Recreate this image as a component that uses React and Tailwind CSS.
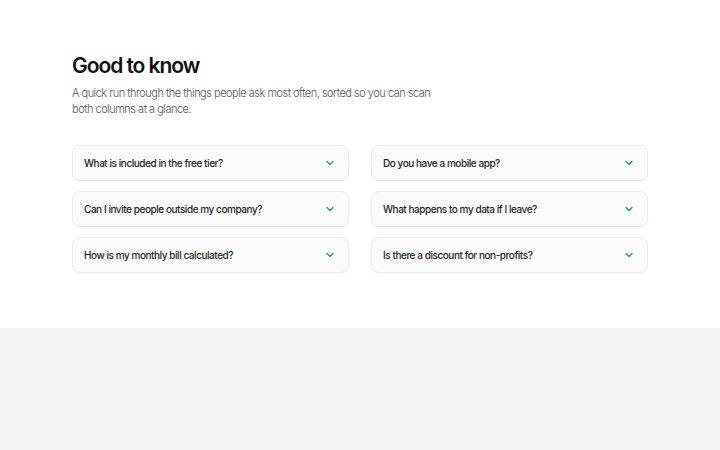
import { ChevronDown } from 'lucide-react';

const left = [
  'What is included in the free tier?',
  'Can I invite people outside my company?',
  'How is my monthly bill calculated?',
];

const right = [
  'Do you have a mobile app?',
  'What happens to my data if I leave?',
  'Is there a discount for non-profits?',
];

function Item({ q }) {
  return (
    <button className="flex h-[36px] w-full items-center justify-between rounded-lg border border-[#ececec] bg-[#fbfbfb] pl-[11px] pr-[12px] text-left shadow-[0_1px_2px_rgba(0,0,0,0.03)]">
      <span className="text-[10px] font-medium tracking-[-0.045em] text-[#1f1f1f]">{q}</span>
      <ChevronDown className="h-3 w-3 text-[#1f9a63]" strokeWidth={2.5} />
    </button>
  );
}

export default function App() {
  return (
    <div className="min-h-[450px] bg-[#f5f5f5] font-['Inter',sans-serif]">
      <section className="bg-white px-[72px] pt-[50px] pb-[55px]">
        <h2 className="text-[21px] font-semibold leading-[32px] tracking-[-0.05em] text-[#111]">
          Good to know
        </h2>
        <p className="mt-[4px] text-[11px] font-light leading-[15.5px] tracking-[-0.045em] text-[#555]">
          A quick run through the things people ask most often, sorted so you can scan
          <br />
          both columns at a glance.
        </p>
        <div className="mt-[28px] grid grid-cols-2 gap-x-[22px]">
          <div className="flex flex-col gap-[10px]">
            {left.map((q) => (
              <Item key={q} q={q} />
            ))}
          </div>
          <div className="flex flex-col gap-[10px]">
            {right.map((q) => (
              <Item key={q} q={q} />
            ))}
          </div>
        </div>
      </section>
    </div>
  );
}
